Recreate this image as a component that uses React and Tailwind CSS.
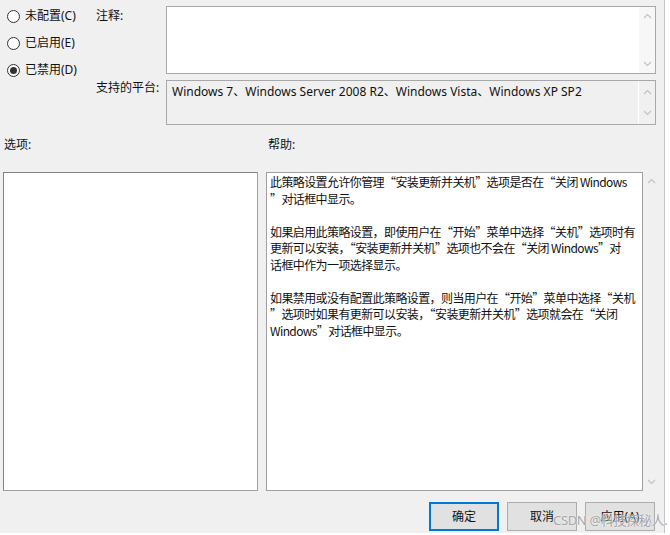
import React from "react";

const font = {
  fontFamily: '"Noto Sans", "Noto Sans CJK SC", sans-serif',
};

const cjk = {
  fontFamily: '"Noto Sans CJK SC", "Noto Sans", sans-serif',
};

function Chevron({ down }) {
  return (
    <svg width="9" height="6" viewBox="0 0 9 6" className="block">
      <polyline
        points={down ? "1,1 4.5,4.5 8,1" : "1,5 4.5,1.5 8,5"}
        fill="none"
        stroke="#c2c2c2"
        strokeWidth="1.2"
      />
    </svg>
  );
}

function Radio({ label, checked }) {
  return (
    <div className="flex items-center h-[18px] gap-[5px]">
      <span className="w-[13px] h-[13px] rounded-full border border-[#333] bg-white flex items-center justify-center">
        {checked && <span className="w-[7px] h-[7px] rounded-full bg-[#333]" />}
      </span>
      <span className="text-[12px] text-[#111]">{label}</span>
    </div>
  );
}

const help = [
  ["此策略设置允许你管理“安装更新并关机”选项是否在“关闭 Windows", "”对话框中显示。"],
  [
    "如果启用此策略设置，即使用户在“开始”菜单中选择“关机”选项时有",
    "更新可以安装，“安装更新并关机”选项也不会在“关闭 Windows”对",
    "话框中作为一项选择显示。",
  ],
  [
    "如果禁用或没有配置此策略设置，则当用户在“开始”菜单中选择“关机",
    "”选项时如果有更新可以安装，“安装更新并关机”选项就会在“关闭",
    "Windows”对话框中显示。",
  ],
];

export default function App() {
  return (
    <div className="relative w-[670px] h-[535px] bg-white overflow-hidden" style={font}>
      <div className="w-[665px] h-[533px] bg-[#f0f0f0] border-r border-[#c4c4c4] text-[#111]">
        {/* top */}
        <div className="flex pt-[6px]">
          <div className="w-[96px] pl-[7px] pt-[1px] flex flex-col gap-[9px]">
            <Radio label="未配置(C)" />
            <Radio label="已启用(E)" />
            <Radio label="已禁用(D)" checked />
          </div>
          <div className="flex flex-col gap-[6px]">
            <div className="flex">
              <div className="w-[70px] text-[12px] leading-[14px] pt-[3px]">注释:</div>
              <div className="w-[490px] h-[68px] border border-[#a8a8a8] bg-white flex justify-end">
                <div className="w-[16px] bg-[#f7f7f7] flex flex-col items-center justify-between py-[6px]">
                  <Chevron />
                  <Chevron down />
                </div>
              </div>
            </div>
            <div className="flex">
              <div className="w-[70px] text-[12px] leading-[14px] pt-[1px]">支持的平台:</div>
              <div className="w-[490px] h-[45px] border border-[#a8a8a8] bg-[#f0f0f0] flex">
                <div className="flex-1 pl-[5px] pt-[3px] text-[12px] leading-[16px]">
                  Windows 7、Windows Server 2008 R2、Windows Vista、Windows XP SP2
                </div>
                <div className="w-[17px] border-l border-white flex flex-col items-center justify-between py-[8px]">
                  <Chevron />
                  <Chevron down />
                </div>
              </div>
            </div>
          </div>
        </div>

        {/* labels */}
        <div className="flex mt-[13px] text-[12px] leading-[14px]">
          <div className="w-[268px] pl-[4px]">选项:</div>
          <div>帮助:</div>
        </div>

        {/* panels */}
        <div className="flex mt-[20px] pl-[3px]">
          <div className="w-[255px] h-[319px] bg-white border border-[#a0a0a0] border-t-[#828282] border-l-[#828282]" />
          <div
            className="ml-[8px] w-[377px] h-[319px] bg-white border border-[#a0a0a0] pl-[3px] pt-[1px] text-[12px] leading-[16.5px] tracking-[-0.6px]"
            style={cjk}
          >
            {help.map((p, i) => (
              <div key={i} className={i > 0 ? "mt-[16.5px]" : ""}>
                {p.map((l, j) => (
                  <div key={j} className="whitespace-nowrap">
                    {l}
                  </div>
                ))}
              </div>
            ))}
          </div>
          <div className="w-[17px] h-[319px] flex flex-col items-center justify-between py-[6px]">
            <Chevron />
            <Chevron down />
          </div>
        </div>

        {/* buttons */}
        <div className="flex mt-[11px] pl-[429px] gap-[8px] text-[12px]">
          <button className="w-[70px] h-[29px] bg-[#e1e1e1] border-2 border-[#0078d7]">确定</button>
          <button className="w-[70px] h-[29px] bg-[#e1e1e1] border border-[#adadad]">取消</button>
          <button className="w-[70px] h-[29px] bg-[#e1e1e1] border border-[#adadad]">应用(A)</button>
        </div>
      </div>
      <div className="absolute left-[553px] top-[511px] text-[13px] text-[#a6a6a6] tracking-tight [text-shadow:0_0_2px_#fff]">
        CSDN @科技探秘人.
      </div>
    </div>
  );
}
